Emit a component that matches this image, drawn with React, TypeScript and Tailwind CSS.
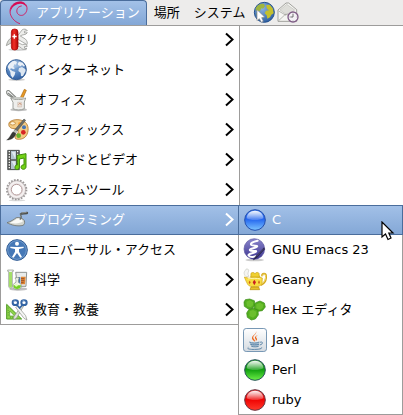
import type { ReactNode } from "react";

function Icon({ children }: { children: ReactNode }) {
  return (
    <svg viewBox="0 0 72 72" className="size-6 shrink-0" fill="none" aria-hidden="true">
      {children}
    </svg>
  );
}

function Gradients() {
  return (
    <svg className="absolute size-0" aria-hidden="true">
      <defs>
        <linearGradient id="ball-blue" x1="0" y1="0" x2="0" y2="1">
          <stop offset="0" stopColor="#3a7cf0" />
          <stop offset="0.45" stopColor="#2264ee" />
          <stop offset="1" stopColor="#7cc4ff" />
        </linearGradient>
        <linearGradient id="ball-green" x1="0" y1="0" x2="0" y2="1">
          <stop offset="0" stopColor="#2a9a2c" />
          <stop offset="0.45" stopColor="#0b9a0b" />
          <stop offset="1" stopColor="#6cf048" />
        </linearGradient>
        <linearGradient id="ball-red" x1="0" y1="0" x2="0" y2="1">
          <stop offset="0" stopColor="#e03030" />
          <stop offset="0.45" stopColor="#ee0000" />
          <stop offset="1" stopColor="#ff3a2c" />
        </linearGradient>
        <linearGradient id="gloss" x1="0" y1="0" x2="0" y2="1">
          <stop offset="0" stopColor="#fff" stopOpacity="0.95" />
          <stop offset="1" stopColor="#fff" stopOpacity="0.15" />
        </linearGradient>
        <radialGradient id="sea" cx="0.4" cy="0.3" r="0.8">
          <stop offset="0" stopColor="#8fb4de" />
          <stop offset="0.6" stopColor="#4a7ab8" />
          <stop offset="1" stopColor="#28569a" />
        </radialGradient>
        <linearGradient id="knife" x1="0" y1="0" x2="1" y2="0">
          <stop offset="0" stopColor="#c00808" />
          <stop offset="0.4" stopColor="#f03028" />
          <stop offset="1" stopColor="#b00404" />
        </linearGradient>
        <linearGradient id="emacs" x1="0" y1="0" x2="0" y2="1">
          <stop offset="0" stopColor="#8a86cc" />
          <stop offset="1" stopColor="#3c3490" />
        </linearGradient>
        <linearGradient id="java" x1="0" y1="0" x2="0" y2="1">
          <stop offset="0" stopColor="#ffffff" />
          <stop offset="1" stopColor="#d4dae0" />
        </linearGradient>
      </defs>
    </svg>
  );
}

function Swirl() {
  return (
    <Icon>
      <path d="M38 68C21 62 9 46 9 31C9 15 21 4 38 3C51 2 61 11 60 24C59 36 50 45 40 43C31 41 27 32 31 23C33 19 37 16 43 15" stroke="#d70a53" strokeWidth="2.500" strokeLinecap="round" />
      <path d="M10 35C8 17 20 3 38 2C48 1 58 8 59 20C54 10 46 7 36 9C22 11 12 21 10 35Z" fill="#d70a53" />
    </Icon>
  );
}

function WebGlobe() {
  return (
    <Icon>
      <circle cx="37" cy="34" r="30" fill="url(#sea)" stroke="#23508c" strokeWidth="3" />
      <path d="M12 20C18 10 27 7 36 9L39 16L33 23L28 22L24 30L17 31L11 28Z" fill="#9fb640" />
      <path d="M42 13L53 11L62 22L65 37L58 41L54 49L46 53L44 43L38 37L42 29L51 28L45 23Z" fill="#c4c02c" />
      <path d="M13 37L23 38L33 47L28 58L17 52Z" fill="#7fa03c" />
      <path d="M15 26V59L22 53L28 64L34 61L29 50L38 48Z" fill="#fff" stroke="#888" strokeWidth="2" />
    </Icon>
  );
}

function MailClock() {
  return (
    <Icon>
      <path d="M6 27L30 6L38 6L62 26V61H6Z" fill="#f5f5f2" stroke="#91918b" strokeWidth="2.500" strokeLinejoin="round" />
      <path d="M12 27L32 10L56 27L34 43Z" fill="#deded9" stroke="#b5b5af" strokeWidth="1.500" />
      <path d="M8 59L27 41L35 39L44 44M8 30L30 43" stroke="#999993" strokeWidth="2" />
      <circle cx="51" cy="48" r="15" fill="#f4f1f5" stroke="#7f5c86" strokeWidth="4" />
      <path d="M51 39V48H43" stroke="#555" strokeWidth="2.500" />
      <path d="M51 35V38M64 48H61M51 61V58M38 48H41" stroke="#999" strokeWidth="2" />
    </Icon>
  );
}

function Knife() {
  return (
    <Icon>
      <ellipse cx="38" cy="65" rx="28" ry="4" fill="#000" opacity="0.18" />
      <path d="M20 28C11 34 6 42 4 53L20 44Z" fill="#d7d9d4" stroke="#888a85" strokeWidth="2" />
      <path d="M38 23L52 5C57 2 64 3 67 8L58 10L59 15L67 14C62 23 52 18 46 24L61 33C67 39 68 45 66 50L39 34Z" fill="#eeeeec" stroke="#888a85" strokeWidth="2" />
      <path d="M39 44L52 50C59 47 66 50 67 55L58 56L59 61L66 61C60 67 51 64 48 59L38 54Z" fill="#eeeeec" stroke="#888a85" strokeWidth="2" />
      <rect x="19" y="3" width="20" height="63" rx="9" fill="url(#knife)" stroke="#a40000" strokeWidth="2" />
      <path d="M28 19V32M22 25.500H35" stroke="#fff" strokeWidth="4" />
    </Icon>
  );
}

function Internet() {
  return (
    <Icon>
      <ellipse cx="35" cy="65" rx="25" ry="4" fill="#000" opacity="0.2" />
      <circle cx="34" cy="35" r="30" fill="url(#sea)" stroke="#365f95" strokeWidth="3" />
      <path d="M8 26C12 16 20 9 29 8L36 12L33 20L28 19L25 27L30 31L25 34L20 31L14 33L22 39L31 42L29 51L23 60L17 52L16 42Z" fill="#e6edf5" />
      <path d="M42 11L53 14L60 24L55 25L51 21L47 25L40 22L38 17Z" fill="#e6edf5" />
      <path d="M42 30L51 27L61 33L62 39L54 54L48 55L47 44L40 39Z" fill="#dce6f1" />
      <path d="M8 31C10 15 22 7 36 7C49 8 59 17 61 29C42 22 25 35 8 31Z" fill="#fff" opacity="0.2" />
    </Icon>
  );
}

function Office() {
  return (
    <Icon>
      <ellipse cx="41" cy="65" rx="25" ry="5" fill="#000" opacity="0.25" />
      <path d="M35 37L9 21C3 16 3 5 12 8L38 33M9 15L31 32" stroke="#858884" strokeWidth="3.500" />
      <path d="M58 4L64 7L51 37L43 35Z" fill="#e99a26" stroke="#a4640c" strokeWidth="2" />
      <path d="M17 30C29 36 52 36 62 30L58 42V62C49 67 32 67 24 62V43Z" fill="#eeeeec" stroke="#8c8f89" strokeWidth="2.500" />
      <path d="M18 30C29 26 52 26 61 30C52 35 29 35 18 30Z" fill="#c8cac5" />
      <path d="M38 43H50V57H38Z" fill="#e9ddd4" stroke="#c8b8ae" strokeWidth="1.500" />
      <path d="M40 50L45 45L49 51" stroke="#cf9e83" strokeWidth="3" />
    </Icon>
  );
}

function Graphics() {
  return (
    <Icon>
      <path d="M13 13C22 4 42 2 57 10C69 17 73 33 66 49C61 61 48 66 34 63C26 60 32 52 38 46C43 38 37 32 27 32C15 32 8 23 13 13Z" fill="#f3cb84" stroke="#b0752a" strokeWidth="2.500" />
      <ellipse cx="23" cy="16" rx="8" ry="5" fill="#fff4da" stroke="#b67824" strokeWidth="2" />
      <circle cx="44" cy="17" r="5" fill="#f9a53a" />
      <circle cx="57" cy="28" r="6" fill="#4676b7" />
      <circle cx="55" cy="43" r="7" fill="#d72525" />
      <circle cx="41" cy="53" r="7" fill="#62b22c" />
      <path d="M57 3L62 7L34 42L28 37Z" fill="#6d706a" stroke="#3b3f40" strokeWidth="1.500" />
      <path d="M32 35L38 41L32 48L24 43Z" fill="#babdb6" />
      <path d="M24 41L33 47C29 58 20 66 5 66C15 60 16 50 24 41Z" fill="#373936" stroke="#222" strokeWidth="1" />
    </Icon>
  );
}

function SoundVideo() {
  return (
    <Icon>
      <path d="M8 7H43V65H8Z" fill="#555753" stroke="#2e3436" strokeWidth="2" />
      <path d="M18 9H33V34H18ZM18 38H33V63H18Z" fill="#b4c4d2" />
      <path d="M20 12L31 32V12ZM20 40L31 60V40Z" fill="#e2eaf0" />
      <path d="M13 9V65M38 9V65" stroke="#f5f5f5" strokeWidth="4" strokeDasharray="4 4" />
      <path d="M36 22L63 17V57C63 65 49 67 48 58C48 52 54 49 57 51V30L43 33V58C42 67 29 67 30 58C30 52 34 50 37 51Z" fill="#73d216" stroke="#3f8c0a" strokeWidth="3" strokeLinejoin="round" />
    </Icon>
  );
}

function Gear() {
  return (
    <Icon>
      <ellipse cx="36" cy="67" rx="25" ry="3" fill="#000" opacity="0.15" />
      <circle cx="35" cy="35" r="29" stroke="#9c9898" strokeWidth="6" strokeDasharray="5 4.110" />
      <circle cx="35" cy="35" r="27" fill="#e6e1e1" stroke="#a39c9c" strokeWidth="2" />
      <circle cx="35" cy="35" r="22" stroke="#f5f0f0" strokeWidth="5" />
      <circle cx="35" cy="35" r="16" fill="#fff" stroke="#b79c9c" strokeWidth="3" />
    </Icon>
  );
}

function Trowel() {
  return (
    <Icon>
      <path d="M6 44C18 41 27 34 34 29C43 27 54 31 58 38C60 45 58 50 54 52C39 56 20 52 6 44Z" fill="#d3d5cf" stroke="#70746e" strokeWidth="2.500" strokeLinejoin="round" />
      <path d="M15 44C24 41 30 35 36 32C44 30 51 34 54 40C46 47 28 48 15 44Z" fill="#fafaf7" />
      <path d="M45 35L49 27L46 18L53 16" stroke="#6a6e69" strokeWidth="4" strokeLinejoin="round" />
      <path d="M50 17L66 15" stroke="#4d504d" strokeWidth="7" strokeLinecap="round" />
      <path d="M50 15L65 13" stroke="#a7aaa4" strokeWidth="2" />
    </Icon>
  );
}

function Accessibility() {
  return (
    <Icon>
      <circle cx="36" cy="36" r="31" fill="#4678b6" stroke="#2c5891" strokeWidth="3" />
      <circle cx="36" cy="36" r="28" stroke="#88add8" strokeWidth="2" />
      <circle cx="36" cy="17" r="6" fill="#fff" />
      <path d="M16 26L32 27H40L56 26V30L42 33V41L51 57L46 59L36 45L26 59L21 57L30 41V33L16 30Z" fill="#fff" />
    </Icon>
  );
}

function Science() {
  return (
    <Icon>
      <ellipse cx="40" cy="63" rx="27" ry="5" fill="#000" opacity="0.25" />
      <path d="M32 13H65L63 55H38Z" fill="#e9eceb" stroke="#7d827e" strokeWidth="2.500" />
      <path d="M39 28L46 27V52H39Z" fill="#4675ae" />
      <path d="M48 26H62L60 49H48Z" fill="#e18532" />
      <path d="M48 32H58M48 38H58M48 44H56" stroke="#753b27" strokeWidth="2" />
      <path d="M8 6H25V10H22V55C21 62 11 62 11 55V10H8Z" fill="#eef4e9" stroke="#8a9187" strokeWidth="2" />
      <path d="M12 12H21V55C20 60 13 60 12 55Z" fill="#a4de68" />
      <path d="M31 29H42V33L40 35V43C55 49 50 65 36 65C22 65 18 49 33 43V35L31 33Z" fill="#f0f5eb" stroke="#828a7c" strokeWidth="2" />
      <path d="M25 52H48C48 60 43 63 36 63C29 63 25 59 25 52Z" fill="#73cf24" />
      <circle cx="34" cy="52" r="4" fill="#e2ffb7" />
    </Icon>
  );
}

function Education() {
  return (
    <Icon>
      <path d="M5 19L50 63H5Z" fill="#8ed34a" stroke="#4e9a22" strokeWidth="3" />
      <path d="M14 39L29 54H14Z" fill="#fff" stroke="#4e9a22" strokeWidth="2" />
      <path d="M8 30H12M8 37H12M8 44H12M8 51H12M16 60V56M23 60V56M30 60V56" stroke="#3f841b" strokeWidth="1.500" />
      <path d="M56 24L34 61L26 65V57L49 24Z" fill="#dfe2dc" stroke="#8b8f88" strokeWidth="2" />
      <path d="M38 24L62 53L66 66L57 61L32 28Z" fill="#f4f5f3" stroke="#8b8f88" strokeWidth="2" />
      <ellipse cx="31" cy="14" rx="8" ry="7" stroke="#3465a4" strokeWidth="6" />
      <ellipse cx="57" cy="14" rx="8" ry="7" stroke="#3465a4" strokeWidth="6" />
      <path d="M36 21L44 30L52 21" stroke="#3465a4" strokeWidth="5" />
      <path d="M25 10L31 8M52 9L58 7" stroke="#97b7dd" strokeWidth="2" />
    </Icon>
  );
}

function Ball({ fill, edge }: { fill: string; edge: string }) {
  return (
    <Icon>
      <circle cx="36" cy="36" r="31" fill={fill} stroke={edge} strokeWidth="3" />
      <path d="M11 31C11 17 22 8 36 8C50 8 61 17 61 31C51 38 21 38 11 31Z" fill="url(#gloss)" />
    </Icon>
  );
}

function Emacs() {
  return (
    <Icon>
      <ellipse cx="35" cy="66" rx="28" ry="4" fill="#000" opacity="0.2" />
      <circle cx="34" cy="33" r="31" fill="url(#emacs)" stroke="#5a549e" strokeWidth="2" />
      <path d="M44 8C30 11 20 17 25 21C31 25 46 21 42 26C38 31 17 31 21 37C25 42 43 36 39 41C35 46 12 47 17 53C21 57 31 57 38 55" stroke="#fff" strokeWidth="6" strokeLinecap="round" />
      <path d="M63 29L37 56L31 66L41 59L65 34Z" fill="#302b57" stroke="#15132c" strokeWidth="1" />
      <path d="M60 34L41 54" stroke="#6e699e" strokeWidth="1.500" />
    </Icon>
  );
}

function Lamp() {
  return (
    <Icon>
      <path d="M9 26C2 20 2 12 7 7C8 2 15 1 17 6C18 11 14 13 15 19L18 25Z" fill="#f5f5f2" stroke="#c9cac5" strokeWidth="2" />
      <path d="M57 25C57 16 69 14 69 24C70 37 64 46 53 51" stroke="#d5a81c" strokeWidth="6" />
      <path d="M57 25C58 17 68 16 68 25C68 36 63 44 54 49" stroke="#fae98a" strokeWidth="2.500" />
      <path d="M4 27L18 31C27 26 49 26 58 30L57 46C53 60 20 60 14 49L9 39Z" fill="#f8dc40" stroke="#cfa518" strokeWidth="2" />
      <path d="M23 27L24 21C21 12 33 12 36 17C39 11 51 12 48 21L51 27Z" fill="#f0d030" stroke="#c39c14" strokeWidth="2" />
      <path d="M24 57H47L50 65H21Z" fill="#e8c02a" stroke="#b78909" strokeWidth="2" />
      <path d="M34 35L39 43L34 52L29 43Z" fill="#c91f22" />
      <path d="M20 38L23 43L20 49L17 43ZM48 37L51 43L48 49L45 43Z" fill="#cf6519" />
      <path d="M14 33C25 30 43 30 52 33" stroke="#fff8b7" strokeWidth="3" />
    </Icon>
  );
}

function HexCells() {
  return (
    <Icon>
      <path d="M7 5L20 3L34 8L36 20L29 31L16 33L4 25L3 12Z" fill="#53ae1f" stroke="#368a12" strokeWidth="2" />
      <path d="M38 14L51 9L64 15L67 27L58 38L45 40L34 32L34 20Z" fill="#53ae1f" stroke="#368a12" strokeWidth="2" />
      <path d="M18 34L32 31L45 37L46 51L37 63L25 66L13 58L11 45Z" fill="#53ae1f" stroke="#368a12" strokeWidth="2" />
      <path d="M10 11L20 7L30 12L30 22L23 28L12 25ZM40 19L51 14L61 20L59 30L51 35L40 31ZM20 39L30 36L40 41L39 52L30 59L19 54Z" fill="#6cbf2e" />
    </Icon>
  );
}

function Java() {
  return (
    <Icon>
      <rect x="1.500" y="1.500" width="69" height="69" rx="8" fill="url(#java)" stroke="#7898b5" strokeWidth="3" />
      <path d="M39 9C44 19 24 23 33 34C36 38 37 39 35 41C28 35 25 31 28 26C31 21 41 17 39 9Z" fill="#ef6518" />
      <path d="M46 20C38 24 38 28 41 31C44 35 41 37 38 40C41 33 34 32 36 28C37 24 42 22 46 20Z" fill="#ef6518" />
      <path d="M19 42C27 46 42 46 50 42L47 54C40 57 30 57 24 54Z" fill="#a9bfd2" />
      <path d="M19 42C26 46 42 46 49 42M22 49C30 51 40 51 48 49M51 43C61 39 61 49 50 51M25 55C32 57 41 57 47 55M16 58C9 63 24 65 39 64C50 64 60 61 55 58" stroke="#5f87a8" strokeWidth="3" />
    </Icon>
  );
}

function Chevron() {
  return (
    <svg viewBox="0 0 10 16" className="h-4 w-2.5 shrink-0" fill="none" aria-hidden="true">
      <path d="M1 1.500L7.500 7.500L1 13.500" stroke="currentColor" strokeWidth="2" />
    </svg>
  );
}

function Pointer() {
  return (
    <svg viewBox="0 0 14 22" className="pointer-events-none absolute top-4 right-2 h-[22px] w-3.5" aria-hidden="true">
      <path d="M1 1V16L4.500 13L7 18.500L10 17L7.800 12H12Z" fill="#fff" stroke="#000" strokeWidth="1.200" />
    </svg>
  );
}

type Entry = { label: string; icon: ReactNode; selected?: boolean };

const categories: Entry[] = [
  { label: "アクセサリ", icon: <Knife /> },
  { label: "インターネット", icon: <Internet /> },
  { label: "オフィス", icon: <Office /> },
  { label: "グラフィックス", icon: <Graphics /> },
  { label: "サウンドとビデオ", icon: <SoundVideo /> },
  { label: "システムツール", icon: <Gear /> },
  { label: "プログラミング", icon: <Trowel />, selected: true },
  { label: "ユニバーサル・アクセス", icon: <Accessibility /> },
  { label: "科学", icon: <Science /> },
  { label: "教育・教養", icon: <Education /> },
];

const programs: Entry[] = [
  { label: "C", icon: <Ball fill="url(#ball-blue)" edge="#234fae" />, selected: true },
  { label: "GNU Emacs 23", icon: <Emacs /> },
  { label: "Geany", icon: <Lamp /> },
  { label: "Hex エディタ", icon: <HexCells /> },
  { label: "Java", icon: <Java /> },
  { label: "Perl", icon: <Ball fill="url(#ball-green)" edge="#28545a" /> },
  { label: "ruby", icon: <Ball fill="url(#ball-red)" edge="#6b3441" /> },
];

function Row({ entry, submenu }: { entry: Entry; submenu?: boolean }) {
  const tone = entry.selected
    ? "bg-linear-to-b from-[#a3c1e8] to-[#83a7d6] text-white ring-1 ring-inset ring-[#4a6d9c]"
    : "text-black";
  return (
    <button
      type="button"
      role="menuitem"
      aria-haspopup={submenu ? "menu" : undefined}
      className={`flex h-[30px] w-full items-center gap-[5px] px-[5px] text-left ${tone}`}
    >
      {entry.icon}
      <span className="flex-1 whitespace-nowrap">{entry.label}</span>
      {submenu && <Chevron />}
    </button>
  );
}

export default function App() {
  return (
    <div className="min-h-screen bg-white font-['DejaVu_Sans','Noto_Sans_CJK_JP',sans-serif] text-[13px] leading-5 text-black">
      <Gradients />
      <nav className="flex h-[26px] items-stretch border-b border-[#9d9c9b] bg-[#edeceb]">
        <button
          type="button"
          className="flex items-center gap-[5px] rounded-t border border-b-0 border-[#4a6d9c] bg-linear-to-b from-[#a3c1e8] to-[#83a7d6] px-1.5 text-white"
        >
          <Swirl />
          アプリケーション
        </button>
        <button type="button" className="px-[7px]">場所</button>
        <button type="button" className="px-[7px]">システム</button>
        <button type="button" aria-label="ウェブ"><WebGlobe /></button>
        <button type="button" aria-label="メール"><MailClock /></button>
      </nav>
      <div className="-mt-px flex items-start">
        <div role="menu" className="w-60 shrink-0 bg-white ring-1 ring-[#9d9c9b] ring-inset">
          {categories.map((c) => (
            <Row key={c.label} entry={c} submenu />
          ))}
        </div>
        <div role="menu" className="relative mt-[180px] -ml-0.5 min-w-0 flex-1 bg-white ring-1 ring-[#9d9c9b] ring-inset">
          {programs.map((p) => (
            <Row key={p.label} entry={p} />
          ))}
          <Pointer />
        </div>
      </div>
    </div>
  );
}
